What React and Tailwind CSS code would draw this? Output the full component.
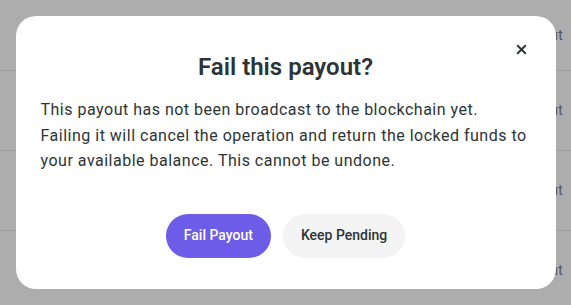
import { X } from 'lucide-react';

const ROWS = [71, 80, 80, 80];

const App = () => {
  return (
    <div className="relative h-[305px] w-[571px] overflow-hidden bg-[#adadad] font-['Roboto',sans-serif]">
      {/* page behind the overlay */}
      <div className="flex flex-col">
        {ROWS.map((h, i) => (
          <div
            key={i}
            className={`flex items-center justify-end border-b border-[#9c9c9c] pr-[8px] text-[15px] text-[#525b63] ${i === 0 ? 'h-[71px]' : 'h-[80px]'}`}
          >
            Payout
          </div>
        ))}
      </div>

      <div className="absolute inset-0 flex items-center justify-center">
        <div className="relative w-[540px] rounded-[20px] bg-white px-6 pt-[35px] pb-[31px]">
          <button className="absolute right-[27px] top-[26px] text-[#2d3436]">
            <X size={15} strokeWidth={3} />
          </button>
          <h2 className="text-center text-[24px] font-semibold leading-8 text-[#2d3436]">Fail this payout?</h2>
          <p className="mt-3.5 pl-px text-[16px] leading-[25.6px] tracking-[0.5px] text-[#2d3436]">
            This payout has not been broadcast to the blockchain yet.
            <br />
            Failing it will cancel the operation and return the locked funds to your available balance. This cannot be undone.
          </p>
          <div className="mt-10 flex justify-center gap-3">
            <button className="h-11 rounded-full bg-[#6c5ce7] px-[18px] text-[14px] font-medium text-white">Fail Payout</button>
            <button className="h-11 rounded-full bg-[#f4f4f4] px-[18px] text-[14px] font-medium text-[#2d3436]">Keep Pending</button>
          </div>
        </div>
      </div>
    </div>
  );
};

export default App;
